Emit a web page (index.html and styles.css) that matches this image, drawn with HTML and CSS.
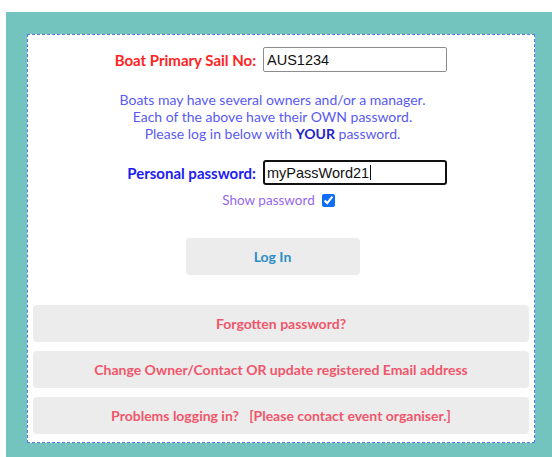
FILE: index.html
```html
<!DOCTYPE html>
<html lang="en">
<head>
<meta charset="utf-8">
<title>Boat Login</title>
<link rel="stylesheet" href="styles.css">
</head>
<body>
<div class="topline"></div>
<div class="frame">
  <form class="card" onsubmit="return false">
    <div class="field-row">
      <label class="label label-sail" for="sail">Boat Primary Sail No:</label>
      <input class="text-input" id="sail" type="text" value="AUS1234">
    </div>

    <p class="info">
      Boats may have several owners and/or a manager.<br>
      Each of the above have their OWN password.<br>
      Please log in below with <b class="your">YOUR</b> password.
    </p>

    <div class="field-row">
      <label class="label label-pass" for="pass">Personal password:</label>
      <span class="input-wrap">
        <input class="text-input text-input-focus" id="pass" type="text" value="myPassWord21">
        <span class="caret"></span>
      </span>
    </div>

    <div class="show-row">
      <label for="show">Show password</label>
      <input class="check" id="show" type="checkbox" checked>
    </div>

    <div class="login-row">
      <button class="btn btn-login" type="submit">Log In</button>
    </div>

    <div class="links">
      <button class="btn btn-link" type="button">Forgotten password?</button>
      <button class="btn btn-link" type="button">Change Owner/Contact OR update registered Email address</button>
      <button class="btn btn-link" type="button">Problems logging in? &nbsp;&nbsp;[Please contact event organiser.]</button>
    </div>
  </form>
</div>
</body>
</html>
```

FILE: styles.css
```css
html, body {
  margin: 0;
  padding: 0;
  background: #ffffff;
}

body {
  font-family: Lato, "Liberation Sans", sans-serif;
  height: 457px;
  overflow: hidden;
}

.topline {
  height: 12px;
}

.frame {
  background: #73c3be;
  margin-left: 6px;
  padding: 22px 17px 20px 21px;
}

.card {
  background: #ffffff;
  border: 1px dashed #5677e6;
  padding: 12px 5px 8px 5px;
  display: flex;
  flex-direction: column;
}

.field-row {
  display: grid;
  grid-template-columns: 223px 184px;
  column-gap: 7px;
  align-items: center;
}

.label {
  text-align: right;
  font-weight: 700;
  font-size: 15px;
}

.label-sail {
  color: #ff2424;
}

.label-pass {
  color: #1c1cf5;
}

.text-input {
  box-sizing: border-box;
  width: 184px;
  height: 25px;
  margin: 0;
  padding: 0 3px;
  border: 1px solid #8c8c8c;
  border-radius: 2px;
  font-family: "Liberation Sans", Arial, sans-serif;
  font-size: 14.5px;
  color: #111111;
  background: #ffffff;
  outline: none;
}

.text-input-focus {
  border: 2px solid #111111;
  border-radius: 3px;
  padding: 0 2px;
}

.input-wrap {
  position: relative;
  display: block;
  width: 184px;
  height: 25px;
}

.caret {
  position: absolute;
  left: 107px;
  top: 5px;
  width: 1px;
  height: 15px;
  background: #111111;
}

.info {
  margin: 19px 0 18px;
  padding-right: 17px;
  text-align: center;
  color: #5a5af0;
  font-size: 14px;
  line-height: 17px;
  font-weight: 400;
}

.your {
  color: #2323c8;
  font-weight: 700;
}

.show-row {
  margin-top: 7px;
  padding-right: 5px;
  display: flex;
  justify-content: center;
  align-items: center;
  gap: 7px;
  color: #9466ee;
  font-size: 13.5px;
  line-height: 17px;
}

.check {
  margin: 0;
  width: 13px;
  height: 13px;
  accent-color: #0f6ef5;
}

.login-row {
  margin-top: 29px;
  display: flex;
  justify-content: center;
  padding-right: 17px;
}

.btn {
  border: none;
  background: #ececec;
  border-radius: 4px;
  font-family: Lato, "Liberation Sans", sans-serif;
  font-weight: 700;
  font-size: 14px;
  height: 37px;
  padding: 0;
  cursor: pointer;
}

.btn-login {
  width: 174px;
  color: #2d8dc8;
}

.links {
  margin-top: 30px;
  display: flex;
  flex-direction: column;
  gap: 9px;
}

.btn-link {
  width: 100%;
  color: #f0566b;
}
```
